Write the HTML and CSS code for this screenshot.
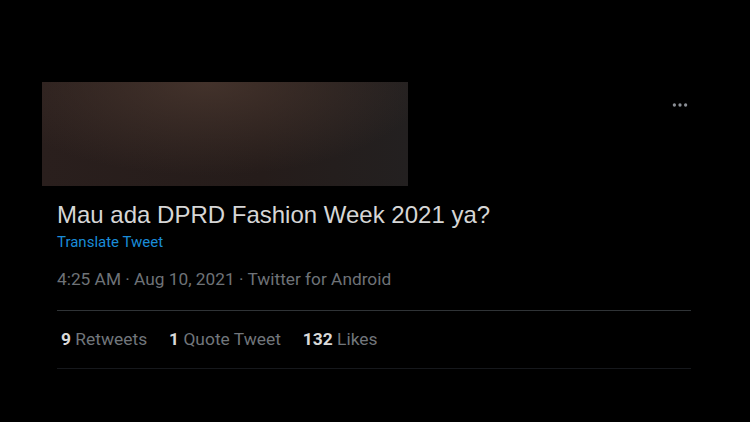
FILE: index.html
```html
<!DOCTYPE html>
<html lang="en">
<head>
  <meta charset="UTF-8">
  <meta name="viewport" content="width=device-width, initial-scale=1.0">
  <title>Tweet</title>
  <link rel="stylesheet" href="styles.css">
</head>
<body>
  <div class="tweet">
    <div class="top-row">
      <div class="media"></div>
      <button class="more-btn" aria-label="More">
        <svg width="18" height="18" viewBox="0 0 24 24"><circle cx="4.5" cy="12" r="2.2"/><circle cx="12" cy="12" r="2.2"/><circle cx="19.5" cy="12" r="2.2"/></svg>
      </button>
    </div>
    <div class="body">
      <p class="text">Mau ada DPRD Fashion Week 2021 ya?</p>
      <a class="translate" href="#">Translate Tweet</a>
      <div class="meta">4:25 AM · Aug 10, 2021 · Twitter for Android</div>
      <div class="stats">
        <span><b>9</b> Retweets</span>
        <span><b>1</b> Quote Tweet</span>
        <span><b>132</b> Likes</span>
      </div>
    </div>
  </div>
</body>
</html>
```
FILE: styles.css
```css
body {
  margin: 0;
  background-color: #000;
  font-family: 'Roboto', 'Liberation Sans', sans-serif;
  color: #d9d9d9;
}

.tweet {
  width: 750px;
  height: 422px;
  box-sizing: border-box;
  padding-top: 82px;
}

.top-row {
  display: flex;
  align-items: flex-start;
  padding-left: 42px;
}

.media {
  width: 366px;
  height: 104px;
  background:
    radial-gradient(ellipse 60% 90% at 45% 0%, rgba(72, 54, 46, 0.85), rgba(72, 54, 46, 0) 100%),
    linear-gradient(90deg, #2a1f1d 0%, #251c1a 60%, #232020 100%);
}

.more-btn {
  margin-left: 263px;
  margin-top: 14px;
  width: 18px;
  height: 18px;
  padding: 0;
  border: none;
  background: none;
  fill: #8b8f96;
}

.body {
  margin: 0 59px 0 57px;
}

.text {
  margin: 14px 0 0;
  font-family: 'Liberation Sans', sans-serif;
  font-size: 24px;
  line-height: 30px;
  color: #d6d6d6;
}

.translate {
  display: block;
  margin-top: 3px;
  font-size: 15px;
  line-height: 18px;
  color: #1a8cd8;
  text-decoration: none;
}

.meta {
  margin-top: 18px;
  padding-bottom: 21px;
  font-size: 17.3px;
  line-height: 20px;
  color: #6e7277;
  border-bottom: 1px solid #2f3336;
}

.stats {
  display: flex;
  gap: 22px;
  padding: 0 4px 1px;
  height: 58px;
  box-sizing: border-box;
  align-items: center;
  font-size: 17.4px;
  color: #71767b;
  border-bottom: 1px solid #16181c;
}

.stats b {
  color: #d9d9d9;
  font-weight: 700;
}
```
